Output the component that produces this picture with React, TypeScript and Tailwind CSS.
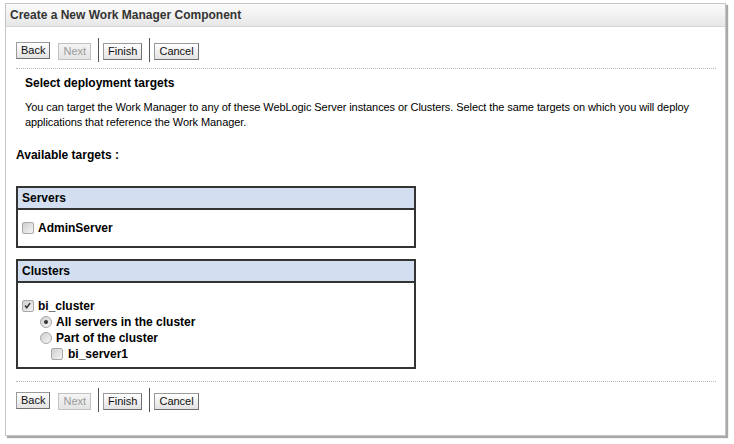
import React from "react";

const font = { fontFamily: '"Liberation Sans", Arial, sans-serif' };

function Btn({ label, disabled }: { label: string; disabled?: boolean }) {
  return (
    <button
      className={
        disabled
          ? "h-[17px] px-[4px] text-[11px] leading-[15px] text-[#9a9a9a] border border-[#c2c2c2] bg-gradient-to-b from-[#f4f4f4] to-[#e4e4e4]"
          : "h-[17px] px-[4px] text-[11px] leading-[15px] text-[#111] border border-[#9a9a9a] border-r-[#707070] border-b-[#707070] bg-gradient-to-b from-[#ffffff] to-[#e2e2e2]"
      }
      style={font}
    >
      {label}
    </button>
  );
}

function Toolbar() {
  return (
    <div className="flex items-center h-[24px] ml-[10px]">
      <Btn label="Back" />
      <div className="ml-[8px]">
        <Btn label="Next" disabled />
      </div>
      <div className="ml-[7px] w-px h-[24px] bg-[#555]" />
      <div className="ml-[4px]">
        <Btn label="Finish" />
      </div>
      <div className="ml-[7px] w-px h-[24px] bg-[#555]" />
      <div className="ml-[4px]">
        <Btn label="Cancel" />
      </div>
    </div>
  );
}

function Check({ checked }: { checked?: boolean }) {
  return (
    <span className="relative inline-block w-[12px] h-[12px] rounded-[2px] border border-[#a8a8a8] bg-gradient-to-br from-[#cfcfcf] to-[#f4f4f4] shrink-0">
      {checked && (
        <svg viewBox="0 0 12 12" className="absolute left-0 top-0 w-[10px] h-[10px]">
          <path d="M2.5 5.5 L4.5 8 L8.5 2.5" stroke="#333" strokeWidth="1.8" fill="none" />
        </svg>
      )}
    </span>
  );
}

function Radio({ checked }: { checked?: boolean }) {
  return (
    <span className="relative inline-flex items-center justify-center w-[12px] h-[12px] rounded-full border border-[#a8a8a8] bg-gradient-to-br from-[#cfcfcf] to-[#f6f6f6] shrink-0">
      {checked && <span className="w-[4px] h-[4px] rounded-full bg-[#333]" />}
    </span>
  );
}

export default function App() {
  return (
    <div className="w-[734px] h-[444px] bg-white overflow-hidden" style={font}>
      <div className="ml-[5px] mt-[3px] w-[721px] h-[433px] border border-[#c4c4c4] bg-white shadow-[2px_2px_1px_#a9a9a9] flex flex-col">
        <div className="h-[23px] border-b border-[#d6d6d6] bg-gradient-to-b from-[#fbfbfb] to-[#e7e7e7] pl-[4px] flex items-center">
          <span className="text-[12px] font-bold text-[#333]">Create a New Work Manager Component</span>
        </div>

        <div className="mt-[11px]">
          <Toolbar />
        </div>

        <div className="mt-[6px] ml-[10px] mr-[9px] border-t border-dotted border-[#b8b8b8]" />

        <div className="mt-[7px] pl-[19px] text-[12px] leading-[15px] font-bold text-black">Select deployment targets</div>
        <div className="mt-[9px] pl-[19px] pr-[20px] text-[11px] leading-[15px] tracking-[-0.08px] text-black">
          You can target the Work Manager to any of these WebLogic Server instances or Clusters. Select the same targets on which you will deploy applications that reference the Work Manager.
        </div>

        <div className="mt-[18px] pl-[10px] text-[12px] leading-[15px] font-bold text-black">Available targets :</div>

        <div className="mt-[23px] ml-[10px] w-[400px] border-2 border-[#333]">
          <div className="h-[22px] bg-[#d3dff0] border-b-2 border-[#333] pl-[4px] flex items-center text-[12px] font-bold text-black">Servers</div>
          <div className="h-[36px] pl-[4px] flex items-center text-[12px] font-bold text-black">
            <Check />
            <span className="ml-[4px]">AdminServer</span>
          </div>
        </div>

        <div className="mt-[11px] ml-[10px] w-[400px] border-2 border-[#333]">
          <div className="h-[22px] bg-[#d3dff0] border-b-2 border-[#333] pl-[4px] flex items-center text-[12px] font-bold text-black">Clusters</div>
          <div className="pt-[15px] pb-[5px] pl-[4px] text-[12px] font-bold text-black">
            <div className="h-[16px] flex items-center">
              <Check checked />
              <span className="ml-[4px]">bi_cluster</span>
            </div>
            <div className="h-[16px] flex items-center pl-[18px]">
              <Radio checked />
              <span className="ml-[4px]">All servers in the cluster</span>
            </div>
            <div className="h-[16px] flex items-center pl-[18px]">
              <Radio />
              <span className="ml-[4px]">Part of the cluster</span>
            </div>
            <div className="h-[16px] flex items-center pl-[29px]">
              <Check />
              <span className="ml-[5px]">bi_server1</span>
            </div>
          </div>
        </div>

        <div className="mt-[12px] ml-[10px] mr-[9px] border-t border-dotted border-[#b8b8b8]" />

        <div className="mt-[6px]">
          <Toolbar />
        </div>
      </div>
    </div>
  );
}
